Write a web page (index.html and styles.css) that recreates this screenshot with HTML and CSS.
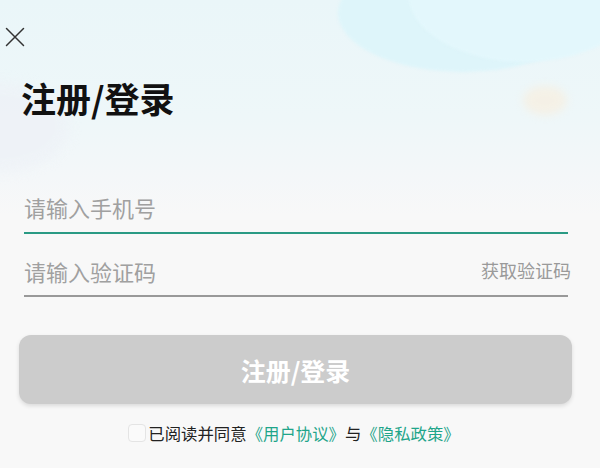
FILE: index.html
```html
<!DOCTYPE html>
<html lang="zh-CN">
<head>
<meta charset="utf-8">
<title>注册/登录</title>
<link rel="stylesheet" href="styles.css">
</head>
<body>
<div class="page">
  <div class="bg-deco" aria-hidden="true">
    <span class="blob blob-a"></span>
    <span class="blob blob-b"></span>
    <span class="blob blob-c"></span>
    <span class="blob blob-d"></span>
  </div>
  <div class="content">
    <div class="topbar">
      <svg class="close" width="20" height="20" viewBox="0 0 20 20">
        <path d="M1.5 1.5 L18.5 18.5 M18.5 1.5 L1.5 18.5" stroke="#333" stroke-width="1.5" fill="none" stroke-linecap="round"/>
      </svg>
    </div>
    <h1 class="title">注册/登录</h1>
    <div class="form">
      <div class="field field-active">
        <span class="placeholder">请输入手机号</span>
      </div>
      <div class="field field-code">
        <span class="placeholder">请输入验证码</span>
        <span class="get-code">获取验证码</span>
      </div>
    </div>
    <div class="btn-wrap">
      <button class="submit" type="button">注册/登录</button>
    </div>
    <div class="agree">
      <span class="checkbox"></span>
      <span class="agree-text">已阅读并同意<span class="link">《用户协议》</span>与<span class="link">《隐私政策》</span></span>
    </div>
  </div>
</div>
</body>
</html>
```
FILE: styles.css
```css
* { box-sizing: border-box; }
html, body { margin: 0; padding: 0; }
body {
  width: 600px;
  height: 468px;
  overflow: hidden;
  font-family: "Noto Sans CJK SC", "Noto Sans", sans-serif;
  background: #f8f8f8;
}
.page {
  position: relative;
  width: 600px;
  height: 468px;
  overflow: hidden;
  background: linear-gradient(180deg, #eaf6f9 0%, #eef7f9 25%, #f4f7f9 38%, #f8f8f8 46%, #f8f8f8 100%);
}
.bg-deco { position: absolute; inset: 0; pointer-events: none; }
.blob { position: absolute; border-radius: 50%; }
.blob-a {
  left: 338px; top: -46px; width: 250px; height: 118px;
  background: #def5fa;
  filter: blur(1.5px);
}
.blob-b {
  left: 408px; top: -76px; width: 232px; height: 138px;
  background: #e3f7fc;
  filter: blur(1.5px);
}
.blob-c {
  left: 523px; top: 86px; width: 44px; height: 29px;
  background: #fcebd4;
  filter: blur(4px);
  opacity: 0.5;
}
.blob-d {
  left: -70px; top: 82px; width: 140px; height: 90px;
  background: #eef2f7;
  filter: blur(6px);
  opacity: 0.8;
}
.content { position: relative; display: flex; flex-direction: column; }
.topbar { height: 74px; padding: 27px 0 0 5px; }
.close { display: block; }
.title {
  margin: 0;
  padding-left: 21px;
  font-size: 35px;
  line-height: 48px;
  font-weight: 700;
  color: #111;
  height: 48px;
}
.form { padding: 0 32px 0 24px; margin-top: 64px; display: flex; flex-direction: column; gap: 15px; }
.field {
  height: 48px;
  display: flex;
  align-items: center;
  justify-content: space-between;
  padding-bottom: 5px;
  border-bottom: 2px solid #999;
}
.field-active { border-bottom-color: #2a9a84; }
.field-code { padding-top: 3px; }
.placeholder { font-size: 22px; line-height: 26px; color: #a0a0a0; }
.get-code { font-size: 18px; line-height: 22px; color: #9a9a9a; margin-right: -3px; margin-top: -2px; }
.btn-wrap { padding: 0 28px 0 19px; margin-top: 38px; }
.submit {
  display: block;
  width: 100%;
  height: 69px;
  border: none;
  border-radius: 12px;
  background: #cccccc;
  color: #fff;
  font-family: inherit;
  font-size: 25px;
  font-weight: 700;
  box-shadow: 0 2px 4px rgba(0,0,0,0.12);
}
.agree {
  margin-top: 19px;
  display: flex;
  align-items: center;
  justify-content: center;
  padding-right: 12px;
}
.checkbox {
  width: 18px; height: 18px;
  border: 1px solid #e4e4e4;
  border-radius: 4px;
  background: #fafafa;
  margin-right: 2px;
}
.agree-text { font-size: 16.4px; color: #222; line-height: 20px; }
.link { color: #1fa58a; }
```
